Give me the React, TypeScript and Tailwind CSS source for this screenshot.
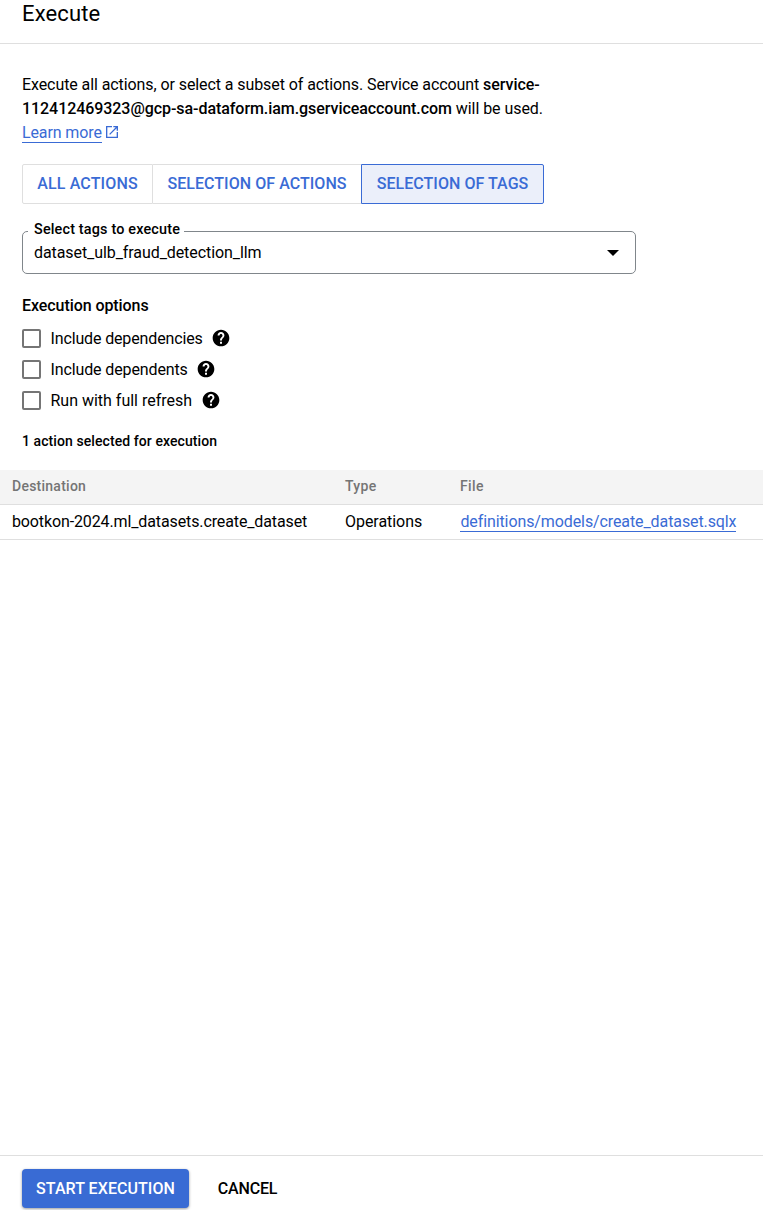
import React from "react";

const Help = () => (
  <svg viewBox="0 0 24 24" className="-mt-[2px] h-5 w-5 shrink-0" fill="#000">
    <path d="M12 2C6.480 2 2 6.480 2 12s4.480 10 10 10 10-4.480 10-10S17.520 2 12 2zm1.200 17h-2.400v-2.400h2.400V19zm1.870-7.750l-.9.920C13.450 12.900 13.200 13.500 13.200 15h-2.400v-.5c0-1.100.45-2.100 1.170-2.830l1.240-1.260c.37-.36.59-.86.59-1.410 0-1-.8-1.800-1.800-1.800s-1.800.8-1.800 1.800H7.900c0-2.260 1.840-4.100 4.100-4.100s4.100 1.840 4.100 4.100c0 .88-.46 1.680-1.030 2.250z" />
  </svg>
);

const options = [
  { label: "Include dependencies", tracking: "mr-2 tracking-[-0.14px]" },
  { label: "Include dependents", tracking: "mr-2 tracking-[-0.12px]" },
  { label: "Run with full refresh", tracking: "mr-[9px] tracking-[-0.01px]" },
];

const columns = [
  { name: "Destination", tracking: "tracking-[0.25px]" },
  { name: "Type", tracking: "tracking-[0.35px]" },
  { name: "File", tracking: "tracking-[0.4px]" },
];

export default function App() {
  return (
    <div className="flex h-[1210px] w-[763px] flex-col overflow-hidden bg-white font-['Roboto',sans-serif] text-base leading-6 text-black">
      <header className="h-11 shrink-0 border-b border-[#dfdfdf] pl-[22px]">
        <h1 className="text-[22px] leading-[27px] tracking-[0.13px]">Execute</h1>
      </header>
      <main className="flex-1">
        <div className="pl-[22px] pt-[29px]">
          <p className="tracking-[-0.06px]">
            <span className="tracking-[-0.085px]">Execute all actions, or select a subset of actions. Service account </span>
            <span className="font-medium">service-<br />112412469323@gcp-sa-dataform.iam.gserviceaccount.com</span> will be used.
          </p>
          <a className="flex h-6 items-start text-[#3a6bd5]">
            <span className="h-[22px] border-b border-[#3a6bd5] tracking-[-0.12px]">Learn more</span>
            <svg viewBox="0 0 24 24" className="ml-[2px] mt-[3px] h-4 w-4" fill="currentColor">
              <path d="M19 19H5V5h7V3H3v18h18v-9h-2v7zM14 3v2h3.590l-9.830 9.830 1.410 1.410L19 6.410V10h2V3h-7z" />
            </svg>
          </a>
          <div className="mt-[19px] flex h-10 font-medium tracking-[0.05px] text-[#3a6bd5]">
            <button className="w-[131px] rounded-l-xs border border-[#dfdfdf] tracking-[0.14px]">ALL ACTIONS</button>
            <button className="w-[208px] border-y border-[#dfdfdf]">SELECTION OF ACTIONS</button>
            <button className="w-[183px] rounded-r-xs border border-[#3a6bd5] bg-[#ebeffa]">SELECTION OF TAGS</button>
          </div>
          <div className="relative mt-[27px] flex h-[43px] w-[614px] items-center justify-between rounded-[5px] border border-[#80868b] pl-[11px] pr-4">
            <span className="absolute -top-[10px] left-[5px] bg-white pl-1.5 pr-1 text-[14.4px] leading-4 font-medium tracking-[0.17px] whitespace-nowrap">Select tags to execute</span>
            <span className="tracking-[-0.08px]">dataset_ulb_fraud_detection_llm</span>
            <svg viewBox="0 0 12 6" className="h-1.5 w-3"><path d="M0 0h12L6 6z" /></svg>
          </div>
          <h2 className="mt-5 font-medium tracking-[-0.07px]">Execution options</h2>
          <div className="mt-[5px]">
            {options.map(({ label, tracking }) => (
              <label key={label} className="flex h-[31px] items-center">
                <span className="mr-[9.5px] h-[19px] w-[19px] shrink-0 rounded-xs border-2 border-[#757575]" />
                <span className={tracking}>{label}</span>
                <Help />
              </label>
            ))}
          </div>
          <p className="mt-[13px] text-sm leading-6 font-medium tracking-[0.08px]">1 action selected for execution</p>
        </div>
        <table className="mt-[17px] w-full table-fixed border-separate border-spacing-0 text-left">
          <colgroup><col className="w-[333px]" /><col className="w-[115px]" /><col /></colgroup>
          <thead>
            <tr className="bg-[#f4f4f4] text-sm text-[#757575]">
              {columns.map(({ name, tracking }) => (
                <th key={name} className={`h-[35px] border-b border-[#dfdfdf] py-0 pl-3 pb-[2px] font-medium ${tracking}`}>{name}</th>
              ))}
            </tr>
          </thead>
          <tbody>
            <tr>
              <td className="h-[35px] border-b border-[#dfdfdf] pl-3 tracking-[-0.12px]">bootkon-2024.ml_datasets.create_dataset</td>
              <td className="border-b border-[#dfdfdf] pl-3 tracking-[-0.05px]">Operations</td>
              <td className="border-b border-[#dfdfdf] pl-3 pb-[2px]"><a className="ml-[0.4px] block h-[22px] w-fit border-b border-[#3a6bd5] tracking-[-0.1px] text-[#3a6bd5]">definitions/models/create_dataset.sqlx</a></td>
            </tr>
          </tbody>
        </table>
      </main>
      <footer className="flex h-[55px] shrink-0 border-t border-[#dfdfdf] pl-[22px] pt-[13px] font-medium">
        <button className="h-[39px] w-[167px] rounded bg-[#396bd4] tracking-[0.06px] text-white shadow-[0_1px_3px_rgba(0,0,0,0.4)]">START EXECUTION</button>
        <button className="ml-[14px] h-[39px] w-[89px] tracking-[-0.15px]">CANCEL</button>
      </footer>
    </div>
  );
}
